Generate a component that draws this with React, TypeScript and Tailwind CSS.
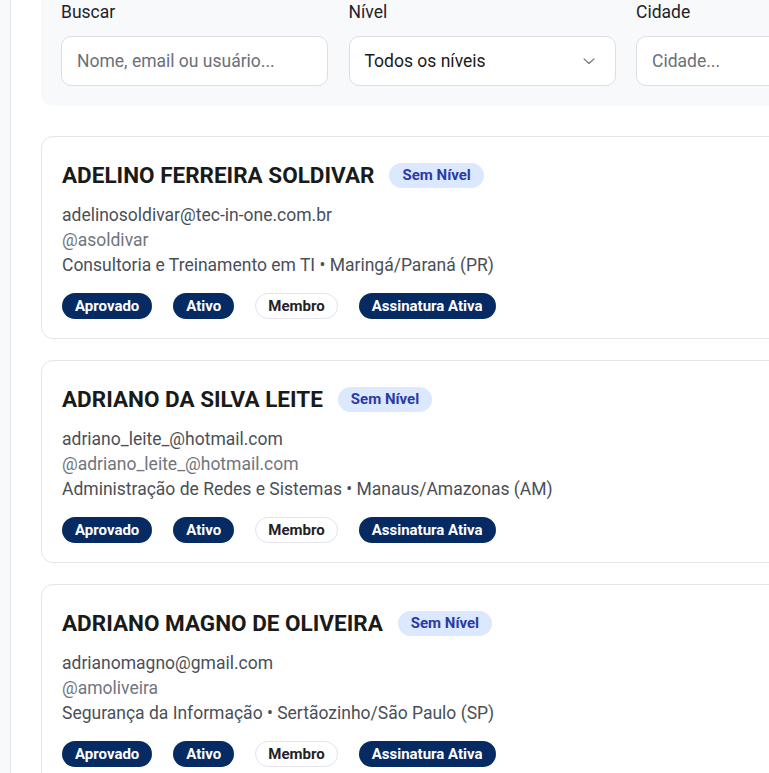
import React from 'react';

type Member = {
  name: string;
  email: string;
  username: string;
  area: string;
  city: string;
};

const members: Member[] = [
  {
    name: 'ADELINO FERREIRA SOLDIVAR',
    email: 'adelinosoldivar@tec-in-one.com.br',
    username: '@asoldivar',
    area: 'Consultoria e Treinamento em TI',
    city: 'Maringá/Paraná (PR)',
  },
  {
    name: 'ADRIANO DA SILVA LEITE',
    email: 'adriano_leite_@hotmail.com',
    username: '@adriano_leite_@hotmail.com',
    area: 'Administração de Redes e Sistemas',
    city: 'Manaus/Amazonas (AM)',
  },
  {
    name: 'ADRIANO MAGNO DE OLIVEIRA',
    email: 'adrianomagno@gmail.com',
    username: '@amoliveira',
    area: 'Segurança da Informação',
    city: 'Sertãozinho/São Paulo (SP)',
  },
];

const Chevron = () => (
  <svg width="20" height="20" viewBox="0 0 24 24" fill="none" stroke="#6b7280" strokeWidth="1.4" strokeLinecap="round" strokeLinejoin="round">
    <path d="M6 9.5l6 5.5 6-5.5" />
  </svg>
);

const Pill = ({ children, outline }: { children: React.ReactNode; outline?: boolean }) => (
  <span
    className={
      outline
        ? 'h-[26px] px-[12px] flex items-center rounded-full border border-[#e2e4e8] bg-white text-[#1f2328] text-[15px] font-bold'
        : 'h-[26px] px-[13px] flex items-center rounded-full bg-[#062b63] text-white text-[15px] font-bold'
    }
  >
    {children}
  </span>
);

const MemberCard = ({ member }: { member: Member }) => (
  <div className="border border-[#e3e5e8] rounded-[12px] bg-white px-[20px] pt-[20px] pb-[19px]">
    <div className="flex items-center gap-[15px] h-[36px]">
      <h2 className="text-[22.5px] font-bold text-[#1a1a1a] leading-none">{member.name}</h2>
      <span className="h-[25px] px-[13px] flex items-center rounded-full bg-[#dce8fd] text-[#2b3aa6] text-[15px] font-bold">
        Sem Nível
      </span>
    </div>
    <div className="mt-[10px] text-[17.5px] leading-[25px]">
      <p className="text-[#4a4f57]">{member.email}</p>
      <p className="text-[#70757d]">{member.username}</p>
      <p className="text-[#4a4f57]">
        {member.area} • {member.city}
      </p>
    </div>
    <div className="flex gap-[21px] mt-[15px]">
      <Pill>Aprovado</Pill>
      <Pill>Ativo</Pill>
      <Pill outline>Membro</Pill>
      <Pill>Assinatura Ativa</Pill>
    </div>
  </div>
);

const App = () => {
  return (
    <div
      className="w-screen h-screen overflow-hidden flex bg-white"
      style={{ fontFamily: 'Roboto, "Noto Sans", sans-serif' }}
    >
      <aside className="w-[11px] shrink-0 bg-[#f8f9fb] border-r border-[#e3e5e8]" />
      <main className="pl-[30px] shrink-0 w-[1100px]">
        <section className="-mt-[20px] bg-[#f8f9fb] rounded-[12px] p-[20px] flex gap-[20.5px]">
          <div className="w-[267px]">
            <label className="block text-[17.5px] leading-[24px] text-[#1f2328]">Buscar</label>
            <div className="mt-[12px] h-[50px] rounded-[10px] border border-[#dcdfe3] bg-white px-[15px] flex items-center text-[17.5px] text-[#6b7078]">
              Nome, email ou usuário...
            </div>
          </div>
          <div className="w-[267px]">
            <label className="block text-[17.5px] leading-[24px] text-[#1f2328]">Nível</label>
            <div className="mt-[12px] h-[50px] rounded-[10px] border border-[#dcdfe3] bg-white pl-[15px] pr-[16px] flex items-center justify-between text-[17.5px] text-[#1a1a1a]">
              <span>Todos os níveis</span>
              <Chevron />
            </div>
          </div>
          <div className="w-[267px]">
            <label className="block text-[17.5px] leading-[24px] text-[#1f2328]">Cidade</label>
            <div className="mt-[12px] h-[50px] rounded-[10px] border border-[#dcdfe3] bg-white px-[15px] flex items-center text-[17.5px] text-[#6b7078]">
              Cidade...
            </div>
          </div>
        </section>
        <div className="mt-[30px] flex flex-col gap-[21px]">
          {members.map((m, i) => (
            <MemberCard key={i} member={m} />
          ))}
        </div>
      </main>
    </div>
  );
};

export default App;
